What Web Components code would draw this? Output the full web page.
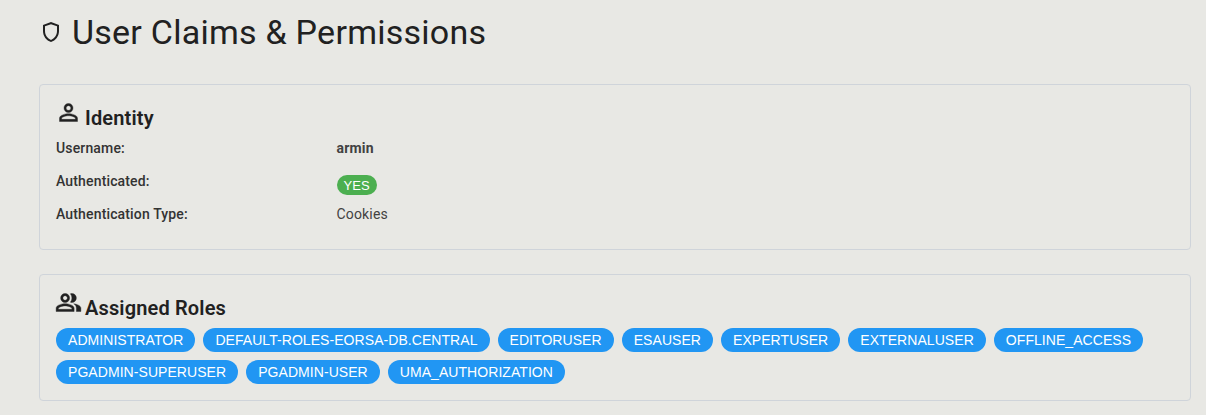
<!DOCTYPE html>
<html>
<head>
<meta charset="utf-8">
<title>User Claims</title>
<style>
  html, body { margin: 0; background: #e8e8e4; height: 415px; overflow: hidden; }
  body { font-family: Roboto, "Liberation Sans", sans-serif; }
</style>
</head>
<body>

<claims-page>
  <page-title>User Claims &amp; Permissions</page-title>

  <claims-card heading="Identity" icon="person">
    <claim-list>
      <claim-row label="Username:"><b style="font-weight:700">armin</b></claim-row>
      <claim-row label="Authenticated:"><role-chip color="#4caf50" small>YES</role-chip></claim-row>
      <claim-row label="Authentication Type:">Cookies</claim-row>
    </claim-list>
  </claims-card>

  <claims-card heading="Assigned Roles" icon="people" compact>
    <role-list>
      <role-chip>ADMINISTRATOR</role-chip>
      <role-chip>DEFAULT-ROLES-EORSA-DB.CENTRAL</role-chip>
      <role-chip>EDITORUSER</role-chip>
      <role-chip>ESAUSER</role-chip>
      <role-chip>EXPERTUSER</role-chip>
      <role-chip>EXTERNALUSER</role-chip>
      <role-chip>OFFLINE_ACCESS</role-chip>
      <role-chip>PGADMIN-SUPERUSER</role-chip>
      <role-chip>PGADMIN-USER</role-chip>
      <role-chip>UMA_AUTHORIZATION</role-chip>
    </role-list>
  </claims-card>
</claims-page>

<script>
// material outlined icons, 24 grid
const ICONS = {
  shield: "M12 2 4 5v6.09c0 5.05 3.41 9.76 8 10.91 4.59-1.15 8-5.86 8-10.91V5l-8-3zm6 9.09c0 4-2.55 7.7-6 8.83-3.45-1.13-6-4.82-6-8.83V6.31l6-2.12 6 2.12v4.78z",
  person: "M12 5.9c1.16 0 2.1.94 2.1 2.1s-.94 2.1-2.1 2.1S9.9 9.16 9.9 8s.94-2.1 2.1-2.1m0 9c2.97 0 6.1 1.46 6.1 2.1v1.1H5.9V17c0-.64 3.13-2.1 6.1-2.1M12 4C9.79 4 8 5.79 8 8s1.79 4 4 4 4-1.79 4-4-1.79-4-4-4zm0 9c-2.67 0-8 1.34-8 4v3h16v-3c0-2.66-5.33-4-8-4z",
  people: "M16.67 13.13C18.04 14.06 19 15.32 19 17v3h4v-3c0-2.18-3.57-3.47-6.33-3.87zM15 12c2.21 0 4-1.79 4-4s-1.79-4-4-4c-.47 0-.91.1-1.33.24C14.5 5.27 15 6.58 15 8s-.5 2.73-1.33 3.76c.42.14.86.24 1.33.24zM9 12c2.21 0 4-1.79 4-4s-1.79-4-4-4-4 1.79-4 4 1.79 4 4 4zm0-6c1.1 0 2 .9 2 2s-.9 2-2 2-2-.9-2-2 .9-2 2-2zm0 7c-2.67 0-8 1.34-8 4v3h16v-3c0-2.66-5.33-4-8-4zm6 5H3v-.99C3.2 16.29 6.3 15 9 15s5.8 1.29 6 2v1z"
};

class ClaimsPage extends HTMLElement {
  constructor() {
    super();
    this.attachShadow({ mode: "open" }).innerHTML = `
      <style>
        :host { display: flex; flex-direction: column; gap: 24px; padding: 0 15px 0 39px; }
      </style>
      <slot></slot>`;
  }
}

class PageTitle extends HTMLElement {
  constructor() {
    super();
    this.attachShadow({ mode: "open" }).innerHTML = `
      <style>
        :host { display: flex; align-items: center; gap: 9px; height: 84px; margin-bottom: -24px; padding: 0 0 21px 0; box-sizing: border-box; color: #212121; }
        svg { width: 24px; height: 24px; fill: currentColor; }
        h1 { margin: 0; font: 400 34px/42px Roboto, sans-serif; letter-spacing: .00735em; }
      </style>
      <svg viewBox="0 0 24 24"><path d="${ICONS.shield}"/></svg>
      <h1><slot></slot></h1>`;
  }
}

class ClaimsCard extends HTMLElement {
  constructor() {
    super();
    this.attachShadow({ mode: "open" });
  }
  connectedCallback() {
    const icon = ICONS[this.getAttribute("icon")];
    const heading = this.getAttribute("heading");
    const bottom = this.hasAttribute("compact") ? "16px" : "12px";
    this.shadowRoot.innerHTML = `
      <style>
        :host { display: block; box-sizing: border-box; border: 1px solid #cfd4da; border-radius: 4px; padding: 16px 16px ${bottom}; color: #212121; }
        header { display: flex; align-items: flex-end; gap: 3px; height: 33px; }
        svg { width: 27px; height: 27px; fill: currentColor; stroke: currentColor; stroke-width: .35; margin: 0 0 8px -1px; flex: none; }
        h2 { margin: 0; font: 600 20px/32px Roboto, sans-serif; letter-spacing: .0075em; }
      </style>
      <header><svg viewBox="0 0 24 24"><path d="${icon}"/></svg><h2>${heading}</h2></header>
      <slot></slot>`;
  }
}

class ClaimList extends HTMLElement {
  constructor() {
    super();
    this.attachShadow({ mode: "open" }).innerHTML = `
      <style>
        :host { display: block; margin-top: 4px; }
      </style>
      <slot></slot>`;
  }
}

class ClaimRow extends HTMLElement {
  constructor() {
    super();
    this.attachShadow({ mode: "open" });
  }
  connectedCallback() {
    this.shadowRoot.innerHTML = `
      <style>
        :host { display: grid; grid-template-columns: 280.6px 1fr; height: 33px; align-items: start; font: 400 14px/20px Roboto, sans-serif; letter-spacing: .01071em; color: #424242; }
        .label { font-weight: 500; color: #333; }
        .value { min-height: 20px; }
      </style>
      <div class="label">${this.getAttribute("label")}</div>
      <div class="value"><slot></slot></div>`;
  }
}

class RoleList extends HTMLElement {
  constructor() {
    super();
    this.attachShadow({ mode: "open" }).innerHTML = `
      <style>
        :host { display: flex; flex-wrap: wrap; gap: 8px; margin-top: 4px; }
      </style>
      <slot></slot>`;
  }
}

class RoleChip extends HTMLElement {
  constructor() {
    super();
    this.attachShadow({ mode: "open" });
  }
  connectedCallback() {
    const small = this.hasAttribute("small");
    const color = this.getAttribute("color") || "#2196f3";
    this.shadowRoot.innerHTML = `
      <style>
        :host { display: inline-flex; align-items: center; box-sizing: border-box;
          height: ${small ? 20 : 24}px; padding: 0 ${small ? 7 : 12}px; border-radius: 12px;
          margin-top: ${small ? 4 : 0}px;
          background: ${color}; color: #fff; letter-spacing: ${small ? 0 : .06}px;
          font: 400 ${small ? 13 : 14}px/1 "Liberation Sans", Arial, sans-serif; }
      </style>
      <slot></slot>`;
  }
}

customElements.define("claims-page", ClaimsPage);
customElements.define("page-title", PageTitle);
customElements.define("claims-card", ClaimsCard);
customElements.define("claim-list", ClaimList);
customElements.define("claim-row", ClaimRow);
customElements.define("role-list", RoleList);
customElements.define("role-chip", RoleChip);
</script>
</body>
</html>
